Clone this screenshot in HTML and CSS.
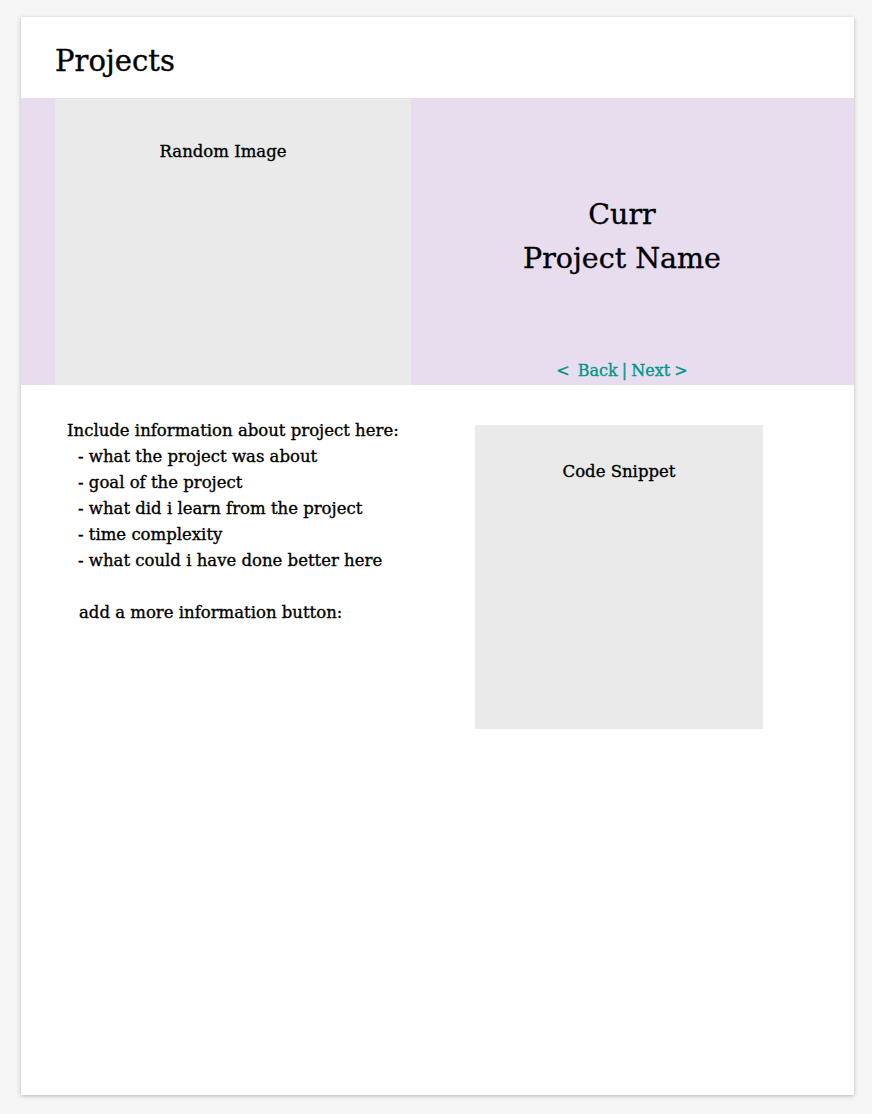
FILE: index.html
```html
<!DOCTYPE html>
<html lang="en">
<head>
<meta charset="utf-8">
<title>Projects</title>
<link rel="stylesheet" href="styles.css">
</head>
<body>
<div class="card">
  <header class="header"><h1 class="title">Projects</h1></header>
  <section class="hero">
    <div class="hero-image"><p class="label">Random Image</p></div>
    <div class="hero-info">
      <h2 class="project-name">Curr<br>Project Name</h2>
      <p class="nav"><a href="#">&lt;&nbsp; Back</a> | <a href="#">Next &gt;</a></p>
    </div>
  </section>
  <section class="details">
    <div class="info">
      <p class="info-head">Include information about project here:</p>
      <p class="item">- what the project was about</p>
      <p class="item">- goal of the project</p>
      <p class="item">- what did i learn from the project</p>
      <p class="item">- time complexity</p>
      <p class="item">- what could i have done better here</p>
      <p class="more">add a more information button:</p>
    </div>
    <div class="snippet"><p class="label">Code Snippet</p></div>
  </section>
</div>
</body>
</html>
```

FILE: styles.css
```css
html, body { margin: 0; padding: 0; }
body {
  background: #f5f5f5;
  font-family: "DejaVu Serif", "Liberation Serif", serif;
  color: #000;
  -webkit-text-stroke: 0.35px currentColor;
}
.card {
  margin: 17px 18px 19px 21px;
  height: 1078px;
  background: #fff;
  box-shadow: 0 1px 4px rgba(0,0,0,0.25);
  display: flex;
  flex-direction: column;
}
.header {
  height: 81px;
  padding-left: 34px;
  border-bottom: 1px solid #e6dcef;
  display: flex;
  align-items: center;
}
.title {
  margin: 0;
  font-size: 29px;
  font-weight: normal;
  position: relative;
  top: 3px;
}
.hero {
  height: 286px;
  background: #e8dcef;
  display: flex;
  padding-left: 34px;
}
.hero-image {
  width: 356px;
  background: #eaeaea;
  text-align: center;
}
.hero-image .label { padding-right: 20px; }
.label {
  margin: 0;
  padding-top: 41px;
  font-size: 16.5px;
  line-height: 24px;
}
.hero-info {
  flex: 1;
  padding-right: 21px;
  display: flex;
  flex-direction: column;
  align-items: center;
}
.project-name {
  margin: 94px 0 0;
  font-size: 28.5px;
  font-weight: normal;
  line-height: 44px;
  text-align: center;
}
.nav {
  margin: auto 0 0;
  padding-bottom: 2px;
  font-size: 16px;
  line-height: 24px;
  color: #009688;
  word-spacing: -1px;
}
.nav a { color: #009688; text-decoration: none; }
.details {
  display: flex;
  padding: 33px 0 0 46px;
}
.info {
  width: 408px;
  font-size: 16.5px;
  line-height: 26px;
}
.info p { margin: 0; }
.info .item { padding-left: 11px; }
.info .more { padding-left: 12px; margin-top: 26px; }
.snippet {
  width: 288px;
  height: 304px;
  margin-top: 7px;
  background: #eaeaea;
  text-align: center;
}
.snippet .label { padding-top: 35px; }
```
